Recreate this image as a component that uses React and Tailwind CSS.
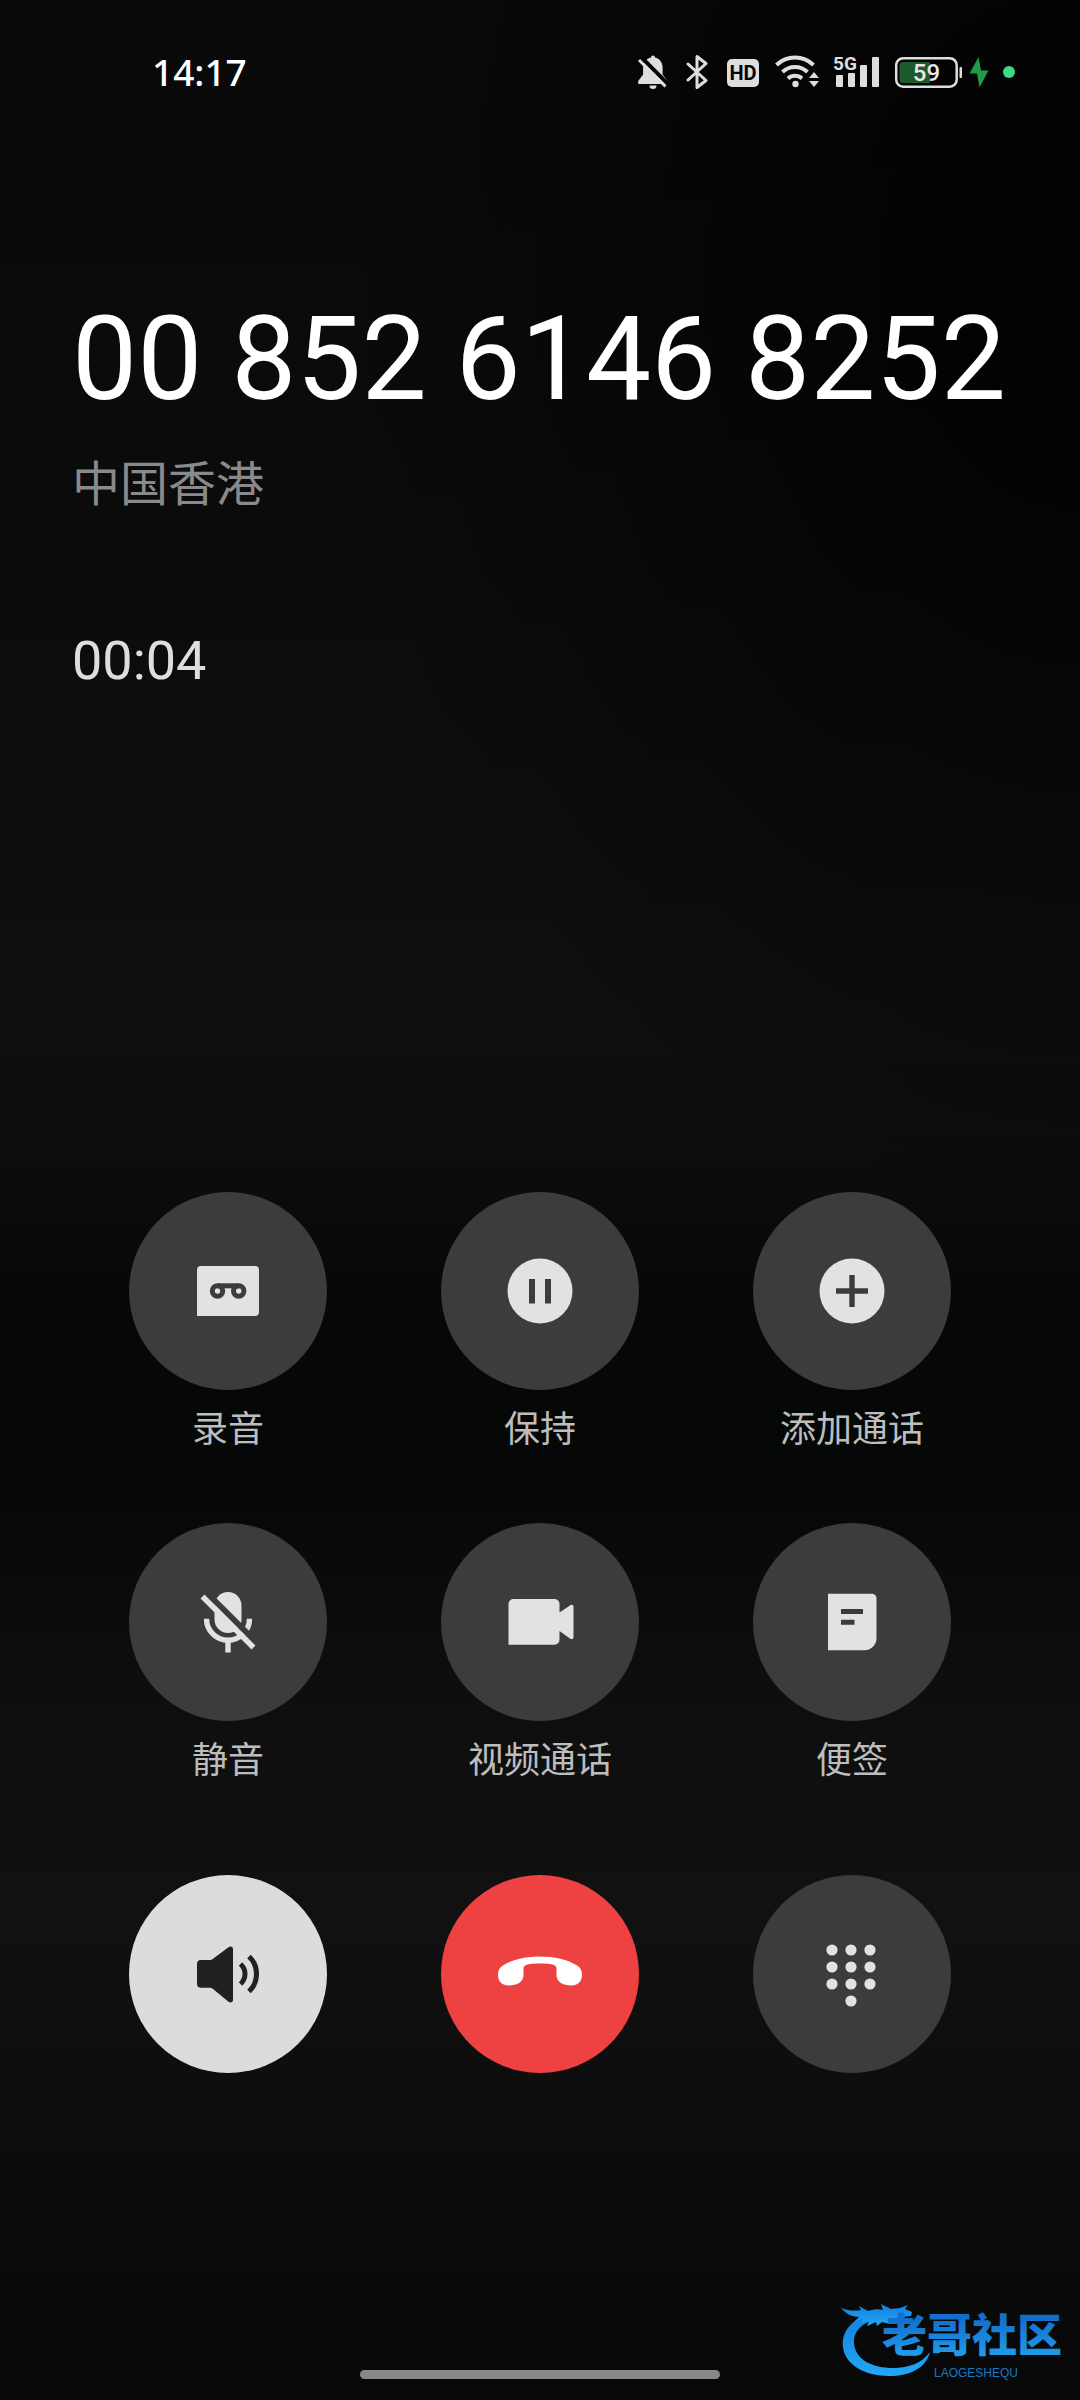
import { useState } from 'react'

// ── Status bar icons ─────────────────────────────────────────────────────────
const BellOffIcon = () => (
  <svg width="32" height="36" viewBox="0 0 32 36" fill="#dedede">
    <path d="M14 3.500a2 2 0 014 0c4.600 1.200 7.600 5 7.600 9.800v7.200l4.900 6.500v3H1.200v-3l4.900-6.500v-7.200C6.100 8.300 9.400 4.700 14 3.500z" />
    <path d="M12.500 31.500h7a3.500 3.500 0 01-7 0z" />
    <path d="M4.500 3.500L31 30" stroke="#040404" strokeWidth="4" />
    <path d="M2 6l26.500 26.500" stroke="#dedede" strokeWidth="3" />
  </svg>
)

const BluetoothIcon = () => (
  <svg width="32" height="36" viewBox="0 0 32 36" fill="none" stroke="#dedede" strokeWidth="3">
    <path d="M7 10l18 16.500-9 7V2.500l9 7L7 26" strokeLinejoin="round" strokeLinecap="round" />
  </svg>
)

const HdIcon = () => (
  <svg width="36" height="36" viewBox="0 0 36 36">
    <rect x="2" y="5" width="32" height="28" rx="5" fill="#dedede" />
    <text x="18" y="26" textAnchor="middle" fontSize="20" fontWeight="700" fill="#040404" className="font-[Roboto]">HD</text>
  </svg>
)

const WifiIcon = () => (
  <svg width="48" height="36" viewBox="0 0 48 36" fill="none" stroke="#dedede" strokeWidth="4">
    <path d="M3.500 11a26.500 26.500 0 0137 0" />
    <path d="M9.500 18a18 18 0 0125 0" />
    <path d="M15 24.500a10.500 10.500 0 0114 0" />
    <circle cx="22.500" cy="30" r="3.200" fill="#dedede" stroke="none" />
    <path d="M41 18l5 6H36zM41 33l5-6H36z" fill="#dedede" stroke="none" />
  </svg>
)

const SignalIcon = () => (
  <svg width="46" height="44" viewBox="0 -4 46 44" fill="#dedede">
    <text x="0" y="16" fontSize="19" fontWeight="700" className="font-[Roboto]">5G</text>
    <rect x="3" y="21" width="7" height="12" rx="1" />
    <rect x="15" y="19" width="7" height="14" rx="1" />
    <rect x="27" y="11" width="7" height="22" rx="1" />
    <rect x="39" y="3" width="7" height="30" rx="1" />
  </svg>
)

const BatteryIcon = () => (
  <svg width="100" height="36" viewBox="0 0 100 36">
    <rect x="5.200" y="4.200" width="60.500" height="28.500" rx="7" fill="none" stroke="#dedede" strokeWidth="2.500" />
    <path d="M12 8h27v21H12a3.500 3.500 0 01-3.500-3.500v-14A3.500 3.500 0 0112 8z" fill="#1d5a2b" />
    <rect x="68.500" y="13" width="2.500" height="11" rx="1" fill="#dedede" />
    <text x="35.500" y="27" textAnchor="middle" fontSize="24" fontWeight="500" fill="#e8e8e8" className="font-[Roboto]">59</text>
    <path d="M87.500 3L78.500 19.500h7.500L88.500 33.500 97.500 16.500h-7.500z" fill="#249a48" />
  </svg>
)

// ── Call action icons ────────────────────────────────────────────────────────
const RecordIcon = () => (
  <svg width="72" height="72" viewBox="0 0 72 72">
    <path d="M9 11h54a4 4 0 014 4v42a4 4 0 01-4 4H5V15a4 4 0 014-4z" fill="#e2e2e2" />
    <g fill="none" stroke="#3c3c3c" strokeWidth="5">
      <circle cx="25.500" cy="36" r="5.200" />
      <circle cx="46.700" cy="36" r="5.200" />
      <path d="M25.500 30.800h21.200" />
    </g>
  </svg>
)

const HoldIcon = () => (
  <svg width="72" height="72" viewBox="0 0 72 72">
    <circle cx="36" cy="36" r="32.500" fill="#e2e2e2" />
    <path d="M25 24h6v24.500h-6zM41 24h6v24.500h-6z" fill="#3c3c3c" />
  </svg>
)

const AddIcon = () => (
  <svg width="72" height="72" viewBox="0 0 72 72">
    <circle cx="36" cy="36" r="32.500" fill="#e2e2e2" />
    <path d="M33.300 20h5.400v13.300H52v5.400H38.700V52h-5.400V38.700H20v-5.400h13.300z" fill="#3c3c3c" />
  </svg>
)

const MuteIcon = () => (
  <svg width="72" height="72" viewBox="0 0 72 72" fill="none">
    <rect x="22.500" y="6" width="27" height="41" rx="13.500" fill="#e2e2e2" />
    <path d="M14.500 32.700a21.500 21.500 0 0043 0M36 54v12.500" stroke="#e2e2e2" strokeWidth="5.400" />
    <path d="M14.500 6.500l51 51" stroke="#3c3c3c" strokeWidth="6" />
    <path d="M10.500 10.500l51 51" stroke="#e2e2e2" strokeWidth="5.400" />
  </svg>
)

const VideoIcon = () => (
  <svg width="72" height="72" viewBox="0 0 72 72" fill="#e2e2e2">
    <path d="M9.500 13h41a5 5 0 015 5v8.500l10.800-7.200c1.600-1 3.200-.3 3.200 1.500v30.400c0 1.800-1.600 2.500-3.200 1.500L55.500 45v8.700a5 5 0 01-5 5h-46V18a5 5 0 015-5z" />
  </svg>
)

const NoteIcon = () => (
  <svg width="72" height="72" viewBox="0 0 72 72">
    <path d="M12 7.700h44a4.500 4.500 0 014.500 4.500v40a12 12 0 01-12 12H12z" fill="#e2e2e2" />
    <path d="M25 23h22v5H25zM25 33.700h13.500v5H25z" fill="#3c3c3c" />
  </svg>
)

const SpeakerIcon = () => (
  <svg width="72" height="72" viewBox="0 0 72 72" fill="#212121">
    <path d="M9 22h8.500c1.500 0 2.300-.3 3.500-1.300L36.500 9.300c2.200-1.500 4.500-.8 4.500 2v50.400c0 2.800-2.300 3.500-4.500 2L21 51c-1.200-1-2-1.300-3.500-1.300H9a4 4 0 01-4-4V26a4 4 0 014-4z" />
    <g fill="none" stroke="#212121" strokeWidth="5">
      <path d="M48.500 26c6 5.500 6 14.500 0 20" />
      <path d="M57 18.500c10 9.500 10 25.500 0 35" />
    </g>
  </svg>
)

const HangUpIcon = () => (
  <svg width="96" height="72" viewBox="0 0 96 72" fill="#ffffff">
    <path d="M48 18.500c14 0 28 3 37 9 4 2.500 5 5.500 5 9.500 0 6.500-4.500 10.500-10.500 10.500-9 0-15-4-15-10.500v-6c0-4-3-5.500-16.500-5.500S31.500 27 31.500 31v6c0 6.500-6 10.500-15 10.500C10.500 47.500 6 43.500 6 37c0-4 1-7 5-9.500 9-6 23-9 37-9z" />
  </svg>
)

const DIALPAD_DOTS = [
  [16, 12], [35, 12], [54, 12],
  [16, 29], [35, 29], [54, 29],
  [16, 46], [35, 46], [54, 46],
  [35, 63],
]

const DialpadIcon = () => (
  <svg width="72" height="72" viewBox="0 0 72 72" fill="#e2e2e2">
    {DIALPAD_DOTS.map(([x, y]) => <circle key={`${x}-${y}`} cx={x} cy={y} r="5.600" />)}
  </svg>
)

// Dragon ring with the community name
const CommunityLogo = () => (
  <svg width="232" height="92" viewBox="0 -12 232 92">
    <defs>
      <linearGradient id="ring" x1="0" y1="0" x2="0" y2="1">
        <stop offset="0" stopColor="#1280e0" />
        <stop offset="1" stopColor="#22a7f5" />
      </linearGradient>
      <linearGradient id="word" x1="0" y1="0" x2="0" y2="1">
        <stop offset="0.300" stopColor="#146fcc" />
        <stop offset="1" stopColor="#22a7f5" />
      </linearGradient>
    </defs>
    <g fill="url(#ring)">
      <path d="M34 11C14 15 1 28 3 45c2 18 22 29 46 29 21 0 37-8 41-24-8 11-21 16-37 16-20 0-38-8-39-25C13 30 22 20 38 17z" />
      <path d="M1 6c8 3 14 3 20 2l-2-4 9 5c6-2 11-2 15-1l-2-6 10 5 9-1 8-3-3 4 7 3-1 4-9 1 8 2-3 5-11-3-6 3-8-2-5 4-1-4-9 4 2-5-8 2 2-4-8 2 4-4C12 15 5 11 1 6z" />
    </g>
    <text x="42" y="50" fontSize="45" fontWeight="900" fill="url(#word)" className="font-['Noto_Sans_CJK_SC',sans-serif]">老哥社区</text>
    <text x="94" y="75" fontSize="12" fill="#1b78c4" className="font-['Liberation_Sans',sans-serif]">LAOGESHEQU</text>
  </svg>
)

const ACTIONS = [
  { id: 'record', label: '录音',     Icon: RecordIcon },
  { id: 'hold',   label: '保持',     Icon: HoldIcon },
  { id: 'add',    label: '添加通话', Icon: AddIcon },
  { id: 'mute',   label: '静音',     Icon: MuteIcon },
  { id: 'video',  label: '视频通话', Icon: VideoIcon },
  { id: 'note',   label: '便签',     Icon: NoteIcon },
]

const ROUND = 'flex size-[198px] items-center justify-center rounded-full'

const ActionButton = ({ label, Icon }) => (
  <button type="button" className="flex flex-col items-center gap-4">
    <span className={`${ROUND} bg-[#3c3c3c]`}><Icon /></span>
    <span className="text-[36px] leading-[48px] text-[#bdbdbd]">{label}</span>
  </button>
)

export default function App() {
  const [speaker, setSpeaker] = useState(true)

  return (
    <div className="relative flex min-h-screen flex-col bg-[radial-gradient(ellipse_70%_40%_at_100%_12%,#000000cc_10%,transparent),linear-gradient(#090909,#0b0b0b_20%,#0f0f0f_42%,#0d0d0d_48%,#070707_54%,#060708_62%,#0e0e0e_70%,#111111_80%,#0c0c0c_90%,#080808)] font-[Roboto,'Noto_Sans_CJK_SC',sans-serif]">

      {/* ── Status bar ─────────────────────────────────────────────────────── */}
      <header className="flex h-36 items-center justify-between pl-[152px] pr-[65px]">
        <time className="font-['Noto_Sans',sans-serif] text-[37px] font-medium text-white">14:17</time>
        <div className="flex items-center gap-3">
          <BellOffIcon />
          <BluetoothIcon />
          <HdIcon />
          <WifiIcon />
          <SignalIcon />
          <BatteryIcon />
          <span className="size-3 rounded-full bg-[#3ddc84]" />
        </div>
      </header>

      <main className="flex flex-1 flex-col px-[72px]">
        {/* ── Caller ───────────────────────────────────────────────────────── */}
        <section className="pt-[151px]">
          <h1 className="whitespace-nowrap text-[116px] leading-[128px] text-white">00 852 6146 8252</h1>
          <p className="mt-[30px] text-[48px] leading-[64px] text-[#8a8a8a]">中国香港</p>
          <p className="mt-[112px] text-[54px] leading-[64px] text-[#dedede]">00:04</p>
        </section>

        {/* ── Call actions ─────────────────────────────────────────────────── */}
        <div className="mt-auto grid grid-cols-3 gap-y-[69px]">
          {ACTIONS.map(a => <ActionButton key={a.id} {...a} />)}
        </div>

        <div className="mt-[90px] grid grid-cols-3 justify-items-center">
          <button
            type="button"
            aria-label="扬声器"
            aria-pressed={speaker}
            onClick={() => setSpeaker(!speaker)}
            className={`${ROUND} ${speaker ? 'bg-[#dcdcdc]' : 'bg-[#8a8a8a]'}`}
          >
            <SpeakerIcon />
          </button>
          <button type="button" aria-label="挂断" className={`${ROUND} bg-[#ee4242]`}>
            <HangUpIcon />
          </button>
          <button type="button" aria-label="拨号键盘" className={`${ROUND} bg-[#3c3c3c]`}>
            <DialpadIcon />
          </button>
        </div>
      </main>

      {/* ── Home indicator ─────────────────────────────────────────────────── */}
      <footer className="flex justify-center pb-[21px] pt-[297px]">
        <div className="h-[9px] w-1/3 rounded-full bg-[#888888]" />
      </footer>

      <div className="absolute bottom-[18px] right-2">
        <CommunityLogo />
      </div>
    </div>
  )
}
